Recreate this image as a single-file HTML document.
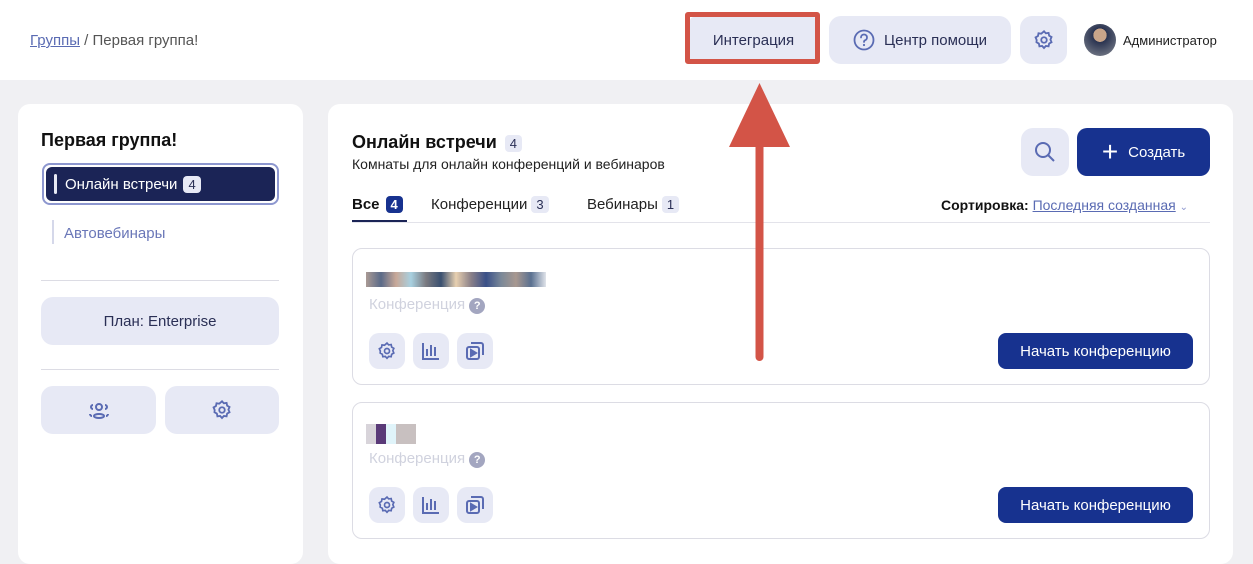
<!DOCTYPE html><html><head><meta charset="utf-8"><style>
*{box-sizing:border-box;margin:0;padding:0}
body{width:1253px;height:549px;overflow:hidden;background:#f0f0f3;font-family:"Liberation Sans",sans-serif;color:#1a1a2e;position:relative}
.hdr{position:absolute;left:0;top:0;width:1253px;height:80px;background:#fff}
.abs{position:absolute}
.btn{position:absolute;background:#e7e9f5;border-radius:12px;display:flex;align-items:center;justify-content:center;color:#2a2f55;font-size:15px}
.card{position:absolute;background:#fff;border-radius:12px}
.badge{display:inline-block;background:#e7e9f5;border-radius:4px;padding:1px 5px;font-size:13px;color:#2a2f55;margin-left:4px}
.item{position:absolute;left:352px;width:858px;border:1px solid #dcdce4;border-radius:10px;background:#fff}
.ib{position:absolute;width:36px;height:36px;background:#e7e9f5;border-radius:10px;display:flex;align-items:center;justify-content:center}
.start{position:absolute;right:16px;width:195px;height:36px;background:#17328f;border-radius:8px;color:#fff;font-size:15px;display:flex;align-items:center;justify-content:center}
</style></head><body>
<div class="hdr"></div>
<div class="abs" style="left:30px;top:32px;font-size:15px;color:#555"><span style="color:#5a6bb3;text-decoration:underline">Группы</span> / Первая группа!</div>
<div class="btn" style="left:690px;top:17px;width:127px;height:46px;border-radius:4px">Интеграция</div>
<div class="abs" style="left:685px;top:12px;width:135px;height:52px;border:5px solid #d35447;border-radius:3px"></div>
<div class="btn" style="left:829px;top:16px;width:182px;height:48px"><svg width="22" height="22" viewBox="0 0 22 22" style="margin-right:9px"><circle cx="11" cy="11" r="9.5" fill="none" stroke="#5a6bb3" stroke-width="1.8"/><path d="M8 8.5a3 3 0 1 1 4 2.8c-.8.4-1 .9-1 1.7" fill="none" stroke="#5a6bb3" stroke-width="1.8" stroke-linecap="round"/><circle cx="11" cy="16" r="1.1" fill="#5a6bb3"/></svg>Центр помощи</div>
<div class="btn" style="left:1020px;top:16px;width:47px;height:48px"><svg width="22" height="22" viewBox="0 0 24 24" fill="none" stroke="#5a6bb3" stroke-width="2"><path d="M12 2.5l2 2.2 3-.4.6 3 2.6 1.5-1.2 2.8 1.2 2.8-2.6 1.5-.6 3-3-.4-2 2.2-2-2.2-3 .4-.6-3-2.6-1.5L4 12 2.8 9.2l2.6-1.5.6-3 3 .4z"/><circle cx="12" cy="12" r="3"/></svg></div>
<div class="abs" style="left:1084px;top:24px;width:32px;height:32px;border-radius:50%;background:radial-gradient(circle at 50% 35%,#c9a58a 0 25%,#2a3350 26%,#6b7180 80%)"></div>
<div class="abs" style="left:1123px;top:33px;font-size:13px;color:#222">Администратор</div>

<div class="card" style="left:18px;top:104px;width:285px;height:460px"></div>
<div class="abs" style="left:41px;top:130px;font-size:18px;font-weight:bold;color:#111">Первая группа!</div>
<div class="abs" style="left:42px;top:163px;width:237px;height:42px;border:2px solid #8d97cf;border-radius:8px;padding:2px"><div style="background:#1b2456;border-radius:6px;height:34px;display:flex;align-items:center;color:#fff;font-size:15px;padding-left:8px"><span style="width:3px;height:20px;background:#e7e9f5;border-radius:2px;margin-right:8px"></span>Онлайн встречи<span class="badge" style="margin-left:6px">4</span></div></div>
<div class="abs" style="left:52px;top:220px;width:2px;height:24px;background:#d5d8ea"></div>
<div class="abs" style="left:64px;top:225px;font-size:15px;color:#6a77b8">Автовебинары</div>
<div class="abs" style="left:41px;top:280px;width:238px;height:1px;background:#dcdce4"></div>
<div class="btn" style="left:41px;top:297px;width:238px;height:48px">План: Enterprise</div>
<div class="abs" style="left:41px;top:369px;width:238px;height:1px;background:#dcdce4"></div>
<div class="btn" style="left:41px;top:386px;width:115px;height:48px"><svg width="24" height="20" viewBox="0 0 24 20" fill="none" stroke="#5a6bb3" stroke-width="2"><circle cx="12" cy="7" r="3"/><ellipse cx="12" cy="16" rx="5" ry="2"/><path d="M6 5a2 2 0 0 0 0 4M18 5a2 2 0 0 1 0 4M3 14c0 1 1 2 2 2M21 14c0 1-1 2-2 2"/></svg></div>
<div class="btn" style="left:165px;top:386px;width:114px;height:48px"><svg width="22" height="22" viewBox="0 0 24 24" fill="none" stroke="#5a6bb3" stroke-width="2"><path d="M12 2.5l2 2.2 3-.4.6 3 2.6 1.5-1.2 2.8 1.2 2.8-2.6 1.5-.6 3-3-.4-2 2.2-2-2.2-3 .4-.6-3-2.6-1.5L4 12 2.8 9.2l2.6-1.5.6-3 3 .4z"/><circle cx="12" cy="12" r="3"/></svg></div>

<div class="card" style="left:328px;top:104px;width:905px;height:460px"></div>
<div class="abs" style="left:352px;top:132px;font-size:18px;font-weight:bold;color:#111">Онлайн встречи<span class="badge" style="margin-left:8px;font-weight:normal">4</span></div>
<div class="abs" style="left:352px;top:156px;font-size:14px;color:#222">Комнаты для онлайн конференций и вебинаров</div>
<div class="btn" style="left:1021px;top:128px;width:48px;height:48px"><svg width="22" height="22" viewBox="0 0 22 22" fill="none" stroke="#5a6bb3" stroke-width="2"><circle cx="9" cy="9" r="7"/><path d="M14 14l6 6"/></svg></div>
<div class="abs" style="left:1077px;top:128px;width:133px;height:48px;background:#17328f;border-radius:10px;color:#fff;font-size:15px;display:flex;align-items:center;justify-content:center"><span style="font-size:28px;font-weight:300;margin-right:10px;line-height:1">+</span>Создать</div>
<div class="abs" style="left:352px;top:196px;font-size:15px;font-weight:bold;color:#111">Все<span class="badge" style="background:#17328f;color:#fff;margin-left:6px">4</span></div>
<div class="abs" style="left:352px;top:220px;width:55px;height:3px;background:#1b2456"></div>
<div class="abs" style="left:431px;top:196px;font-size:15px;color:#222">Конференции<span class="badge">3</span></div>
<div class="abs" style="left:587px;top:196px;font-size:15px;color:#222">Вебинары<span class="badge">1</span></div>
<div class="abs" style="left:352px;top:222px;width:858px;height:1px;background:#e3e3ea"></div>
<div class="abs" style="left:941px;top:197px;font-size:14px;color:#111"><b>Сортировка:</b> <span style="color:#5a6bb3;text-decoration:underline">Последняя созданная</span> <span style="color:#8d97cf;font-size:10px">⌄</span></div>

<div class="item" style="top:248px;height:137px">
<div class="abs" style="left:13px;top:23px;width:180px;height:15px;background:linear-gradient(90deg,#aa9a94,#5a6a88,#c8a898,#a8d0e0,#7a7a80,#3a5070,#e8d0b0,#8a8088,#3a5088,#7a8898,#a89890,#5a7090,#e0e4ea)"></div>
<div class="abs" style="left:16px;top:47px;font-size:15px;color:#d0d2de">Конференция <span style="display:inline-block;width:16px;height:16px;border-radius:50%;background:#a3a6c0;color:#fff;font-size:11px;text-align:center;line-height:16px;font-weight:bold">?</span></div>
<div class="ib" style="left:16px;top:84px"><svg width="20" height="20" viewBox="0 0 24 24" fill="none" stroke="#5a6bb3" stroke-width="2"><path d="M12 2.5l2 2.2 3-.4.6 3 2.6 1.5-1.2 2.8 1.2 2.8-2.6 1.5-.6 3-3-.4-2 2.2-2-2.2-3 .4-.6-3-2.6-1.5L4 12 2.8 9.2l2.6-1.5.6-3 3 .4z"/><circle cx="12" cy="12" r="3"/></svg></div>
<div class="ib" style="left:60px;top:84px"><svg width="20" height="20" viewBox="0 0 20 20" fill="none" stroke="#5a6bb3" stroke-width="2"><path d="M2 2v16h16M6 8v7M10 4v11M14 6v9"/></svg></div>
<div class="ib" style="left:104px;top:84px"><svg width="20" height="20" viewBox="0 0 20 20" fill="none" stroke="#5a6bb3" stroke-width="2"><rect x="2" y="6" width="12" height="12" rx="2"/><path d="M6 2h10a2 2 0 0 1 2 2v10"/><path d="M6 9l5 3-5 3z" fill="#5a6bb3"/></svg></div>
<div class="start" style="top:84px">Начать конференцию</div>
</div>
<div class="item" style="top:402px;height:137px">
<div class="abs" style="left:13px;top:21px;width:50px;height:20px;background:linear-gradient(90deg,#d8d4da 20%,#5a3a78 20% 40%,#e0f4fa 40% 60%,#c8c0c0 60%)"></div>
<div class="abs" style="left:16px;top:47px;font-size:15px;color:#d0d2de">Конференция <span style="display:inline-block;width:16px;height:16px;border-radius:50%;background:#a3a6c0;color:#fff;font-size:11px;text-align:center;line-height:16px;font-weight:bold">?</span></div>
<div class="ib" style="left:16px;top:84px"><svg width="20" height="20" viewBox="0 0 24 24" fill="none" stroke="#5a6bb3" stroke-width="2"><path d="M12 2.5l2 2.2 3-.4.6 3 2.6 1.5-1.2 2.8 1.2 2.8-2.6 1.5-.6 3-3-.4-2 2.2-2-2.2-3 .4-.6-3-2.6-1.5L4 12 2.8 9.2l2.6-1.5.6-3 3 .4z"/><circle cx="12" cy="12" r="3"/></svg></div>
<div class="ib" style="left:60px;top:84px"><svg width="20" height="20" viewBox="0 0 20 20" fill="none" stroke="#5a6bb3" stroke-width="2"><path d="M2 2v16h16M6 8v7M10 4v11M14 6v9"/></svg></div>
<div class="ib" style="left:104px;top:84px"><svg width="20" height="20" viewBox="0 0 20 20" fill="none" stroke="#5a6bb3" stroke-width="2"><rect x="2" y="6" width="12" height="12" rx="2"/><path d="M6 2h10a2 2 0 0 1 2 2v10"/><path d="M6 9l5 3-5 3z" fill="#5a6bb3"/></svg></div>
<div class="start" style="top:84px">Начать конференцию</div>
</div>

<svg class="abs" style="left:720px;top:80px" width="80" height="290" viewBox="0 0 80 290"><path d="M39.5 55V277" stroke="#d35447" stroke-width="8" stroke-linecap="round"/><path d="M39.5 3L9 67H70z" fill="#d35447"/></svg>
</body></html>
